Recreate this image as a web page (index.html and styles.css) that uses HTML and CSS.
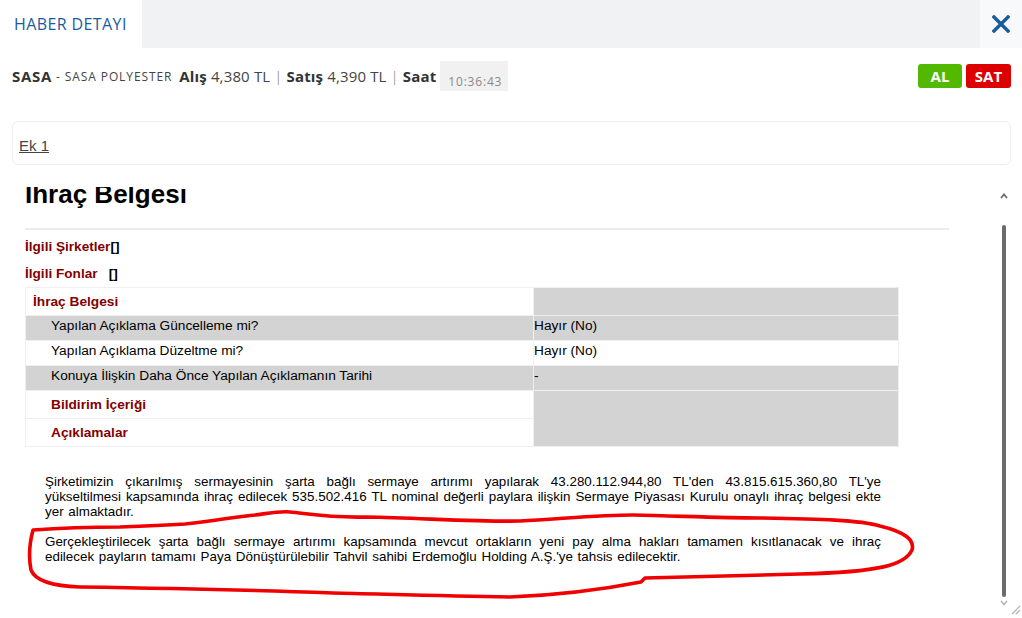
FILE: index.html
```html
<!DOCTYPE html>
<html lang="tr">
<head>
<meta charset="UTF-8">
<meta name="viewport" content="width=device-width, initial-scale=1.0">
<title>Haber Detayı</title>
<link rel="stylesheet" href="styles.css">
</head>
<body>

<div class="modal">
  <div class="modal-head">
    <div class="tab">HABER DETAYI</div>
    <div class="head-fill"></div>
    <button class="close" title="Kapat">
      <svg width="18" height="18" viewBox="0 0 18 18"><path d="M2 2 L16 16 M16 2 L2 16" stroke="#1b5b9c" stroke-width="3.4" stroke-linecap="square"/></svg>
    </button>
  </div>

  <div class="quote-row">
    <div class="quote">
      <b class="code">SASA</b>
      <span class="name">- SASA POLYESTER</span>
      <b>Alış</b> <span>4,380 TL</span> <span class="sep">|</span>
      <b>Satış</b> <span>4,390 TL</span> <span class="sep">|</span>
      <b>Saat</b>
      <span class="time">10:36:43</span>
    </div>
    <div class="trade">
      <button class="btn btn-al">AL</button>
      <button class="btn btn-sat">SAT</button>
    </div>
  </div>

  <div class="attach"><a href="#">Ek 1</a></div>

  <div class="viewer">
    <div class="doc">
      <div class="doc-inner">
        <h2>İhraç Belgesi</h2>
        <hr>
        <div class="rel first"><span class="lbl">İlgili Şirketler</span>[]</div>
        <div class="rel"><span class="lbl">İlgili Fonlar&nbsp;&nbsp;&nbsp;</span>[]</div>

        <table class="kap">
          <colgroup><col class="k1"><col class="k2"></colgroup>
          <tr class="title">
            <td class="c1"><span class="lbl">İhraç Belgesi</span></td>
            <td class="grey"></td>
          </tr>
          <tr class="q grey">
            <td class="c1 indent">Yapılan Açıklama Güncelleme mi?</td>
            <td>Hayır (No)</td>
          </tr>
          <tr class="q">
            <td class="c1 indent">Yapılan Açıklama Düzeltme mi?</td>
            <td>Hayır (No)</td>
          </tr>
          <tr class="q grey">
            <td class="c1 indent">Konuya İlişkin Daha Önce Yapılan Açıklamanın Tarihi</td>
            <td>-</td>
          </tr>
          <tr class="title">
            <td class="c1 indent"><span class="lbl">Bildirim İçeriği</span></td>
            <td class="grey" rowspan="2"></td>
          </tr>
          <tr class="title">
            <td class="c1 indent"><span class="lbl">Açıklamalar</span></td>
          </tr>
        </table>

        <div class="text">
          <p>
            <span class="ln">Şirketimizin çıkarılmış sermayesinin şarta bağlı sermaye artırımı yapılarak 43.280.112.944,80 TL'den 43.815.615.360,80 TL'ye</span>
            <span class="ln">yükseltilmesi kapsamında ihraç edilecek 535.502.416 TL nominal değerli paylara ilişkin Sermaye Piyasası Kurulu onaylı ihraç belgesi ekte</span>
            <span class="last">yer almaktadır.</span>
          </p>
          <p>
            <span class="ln">Gerçekleştirilecek şarta bağlı sermaye artırımı kapsamında mevcut ortakların yeni pay alma hakları tamamen kısıtlanacak ve ihraç</span>
            <span class="last">edilecek payların tamamı Paya Dönüştürülebilir Tahvil sahibi Erdemoğlu Holding A.Ş.'ye tahsis edilecektir.</span>
          </p>
        </div>
      </div>
    </div>

    <div class="vbar">
      <svg class="arrow" width="10" height="14" viewBox="0 0 10 14"><path d="M2 9 L5 5.5 L8 9" fill="none" stroke="#6b6b6b" stroke-width="1.8"/></svg>
      <div class="track"><div class="thumb"></div></div>
      <svg class="arrow" width="10" height="12" viewBox="0 0 10 12"><path d="M2 4 L5 7.5 L8 4" fill="none" stroke="#b5b5b5" stroke-width="1.6"/></svg>
    </div>

    <svg class="resizer" width="10" height="10" viewBox="0 0 10 10"><path d="M1 9 L9 1 M5 9 L9 5" stroke="#b0b0b0" stroke-width="1.2"/></svg>
  </div>

  <svg class="mark" width="1022" height="618" viewBox="0 0 1022 618">
    <path d="M33 530 C60 528 90 527 120 527 C150 526 170 525 185 524 C220 520 240 516 255 515 C270 513 280 511 290 512 C310 514 330 518 367 517 C420 518 480 522 520 521 C560 519 600 515 633 515 C680 516 720 518 760 518 C820 519 860 520 880 526 C905 532 915 540 912 550 C905 565 880 572 800 574 C740 576 680 577 645 578 L641 582 C600 590 560 595 510 597 C440 596 380 594 333 593 C250 590 150 588 80 587 C50 586 35 580 31 570 C29 560 29 545 33 530 Z" fill="none" stroke="#f00000" stroke-width="3.6" stroke-linejoin="round"/>
  </svg>
</div>

</body>
</html>
```

FILE: styles.css
```css
html, body {
  margin: 0;
  height: 100%;
  background-color: #fff;
}
body {
  font-family: "Open Sans", Lato, sans-serif;
  color: #444;
  overflow: hidden;
}
.modal {
  position: relative;
  width: 1022px;
  height: 618px;
}
.modal-head {
  display: flex;
  height: 48px;
}
.tab {
  width: 142px;
  padding-left: 14px;
  box-sizing: border-box;
  line-height: 48px;
  font-size: 16px;
  letter-spacing: 0.4px;
  color: #1a5ca0;
  background: #fff;
}
.head-fill {
  flex: 1;
  background: #f1f2f4;
}
.close {
  width: 42px;
  border: 0;
  padding: 0;
  background: #f8f9fa;
  display: flex;
  align-items: center;
  justify-content: center;
}
.quote-row {
  display: flex;
  align-items: center;
  justify-content: space-between;
  height: 30px;
  margin: 13px 11px 0 12px;
}
.quote {
  display: flex;
  align-items: center;
  gap: 4px;
  height: 30px;
  font-size: 15px;
  letter-spacing: 0.15px;
  color: #444;
  white-space: pre;
}
.quote b {
  color: #333;
}
.quote .code {
  letter-spacing: 0.7px;
}
.quote .name {
  font-size: 12px;
  letter-spacing: 0.9px;
  margin-right: 3px;
}
.quote .sep {
  color: #777;
  font-weight: 300;
}
.time {
  align-self: stretch;
  display: flex;
  align-items: flex-end;
  padding: 0 6px 2px 8px;
  line-height: 14px;
  font-size: 12px;
  letter-spacing: 0.8px;
  color: #888;
  background: #f1f1f1;
}
.trade {
  display: flex;
  gap: 4px;
}
.btn {
  width: 44px;
  height: 24px;
  border: 0;
  border-radius: 3px;
  padding: 0;
  font-family: "Open Sans", sans-serif;
  font-weight: bold;
  font-size: 15px;
  color: #fff;
}
.btn-al {
  background: #52b900;
}
.btn-sat {
  width: 45px;
  background: #dc0000;
}
.attach {
  height: 44px;
  margin: 30px 11px 0 12px;
  box-sizing: border-box;
  border: 1px solid #eeeeee;
  border-radius: 6px;
  padding: 15px 0 0 6px;
  font-family: "Liberation Sans", Arial, sans-serif;
  font-size: 15px;
  line-height: 17px;
}
.attach a {
  color: #444;
}
.viewer {
  position: relative;
  display: flex;
  height: 430px;
  margin-top: 22px;
  padding-left: 12px;
}
.doc {
  flex: 1;
  overflow: hidden;
  padding-left: 13px;
  font-family: "Liberation Sans", Arial, sans-serif;
  color: #000;
}
.doc-inner {
  width: 924px;
  margin-top: -8px;
}
.doc h2 {
  margin: 0;
  font-size: 26px;
  line-height: 30px;
  font-weight: bold;
}
.doc hr {
  margin: 19px 0 0;
  border: 0;
  border-top: 2px solid #ececec;
  height: 0;
}
.rel {
  line-height: 27px;
  font-size: 13.6px;
  font-weight: bold;
}
.rel.first {
  margin-top: 3px;
}
.lbl {
  color: #840000;
  font-weight: bold;
}
.kap {
  width: 873px;
  table-layout: fixed;
  border-collapse: collapse;
  font-size: 13.7px;
}
.kap col.k1 {
  width: 508px;
}
.kap col.k2 {
  width: 365px;
}
.kap td {
  border: 1px solid #efefef;
  padding: 0;
}
.kap .c1 {
  padding-left: 7px;
}
.kap .c1.indent {
  padding-left: 25px;
}
.kap .grey,
.kap tr.grey td {
  background: #d3d3d3;
}
.kap tr.title td {
  height: 27px;
  vertical-align: middle;
}
.kap tr.q td {
  height: 25px;
  vertical-align: top;
  padding-top: 2px;
  box-sizing: border-box;
}
.text {
  width: 836px;
  margin: 27px 0 0 20px;
  font-size: 13.4px;
}
.text p {
  margin: 0 0 15px;
}
.text .ln {
  display: block;
  text-align: justify;
  text-align-last: justify;
  white-space: nowrap;
}
.text .last {
  display: block;
  word-spacing: 1px;
}
.vbar {
  width: 16px;
  margin-right: 10px;
  padding-top: 2px;
  display: flex;
  flex-direction: column;
  align-items: center;
}
.arrow {
  flex: none;
}
.track {
  height: 394px;
  padding-top: 22px;
  box-sizing: border-box;
  display: flex;
  justify-content: center;
}
.thumb {
  width: 4px;
  height: 372px;
  border-radius: 2px;
  background: #6b6b6b;
}
.resizer {
  position: absolute;
  right: 1px;
  bottom: 2px;
}
.mark {
  position: absolute;
  top: 0;
  left: 0;
  pointer-events: none;
}
```
